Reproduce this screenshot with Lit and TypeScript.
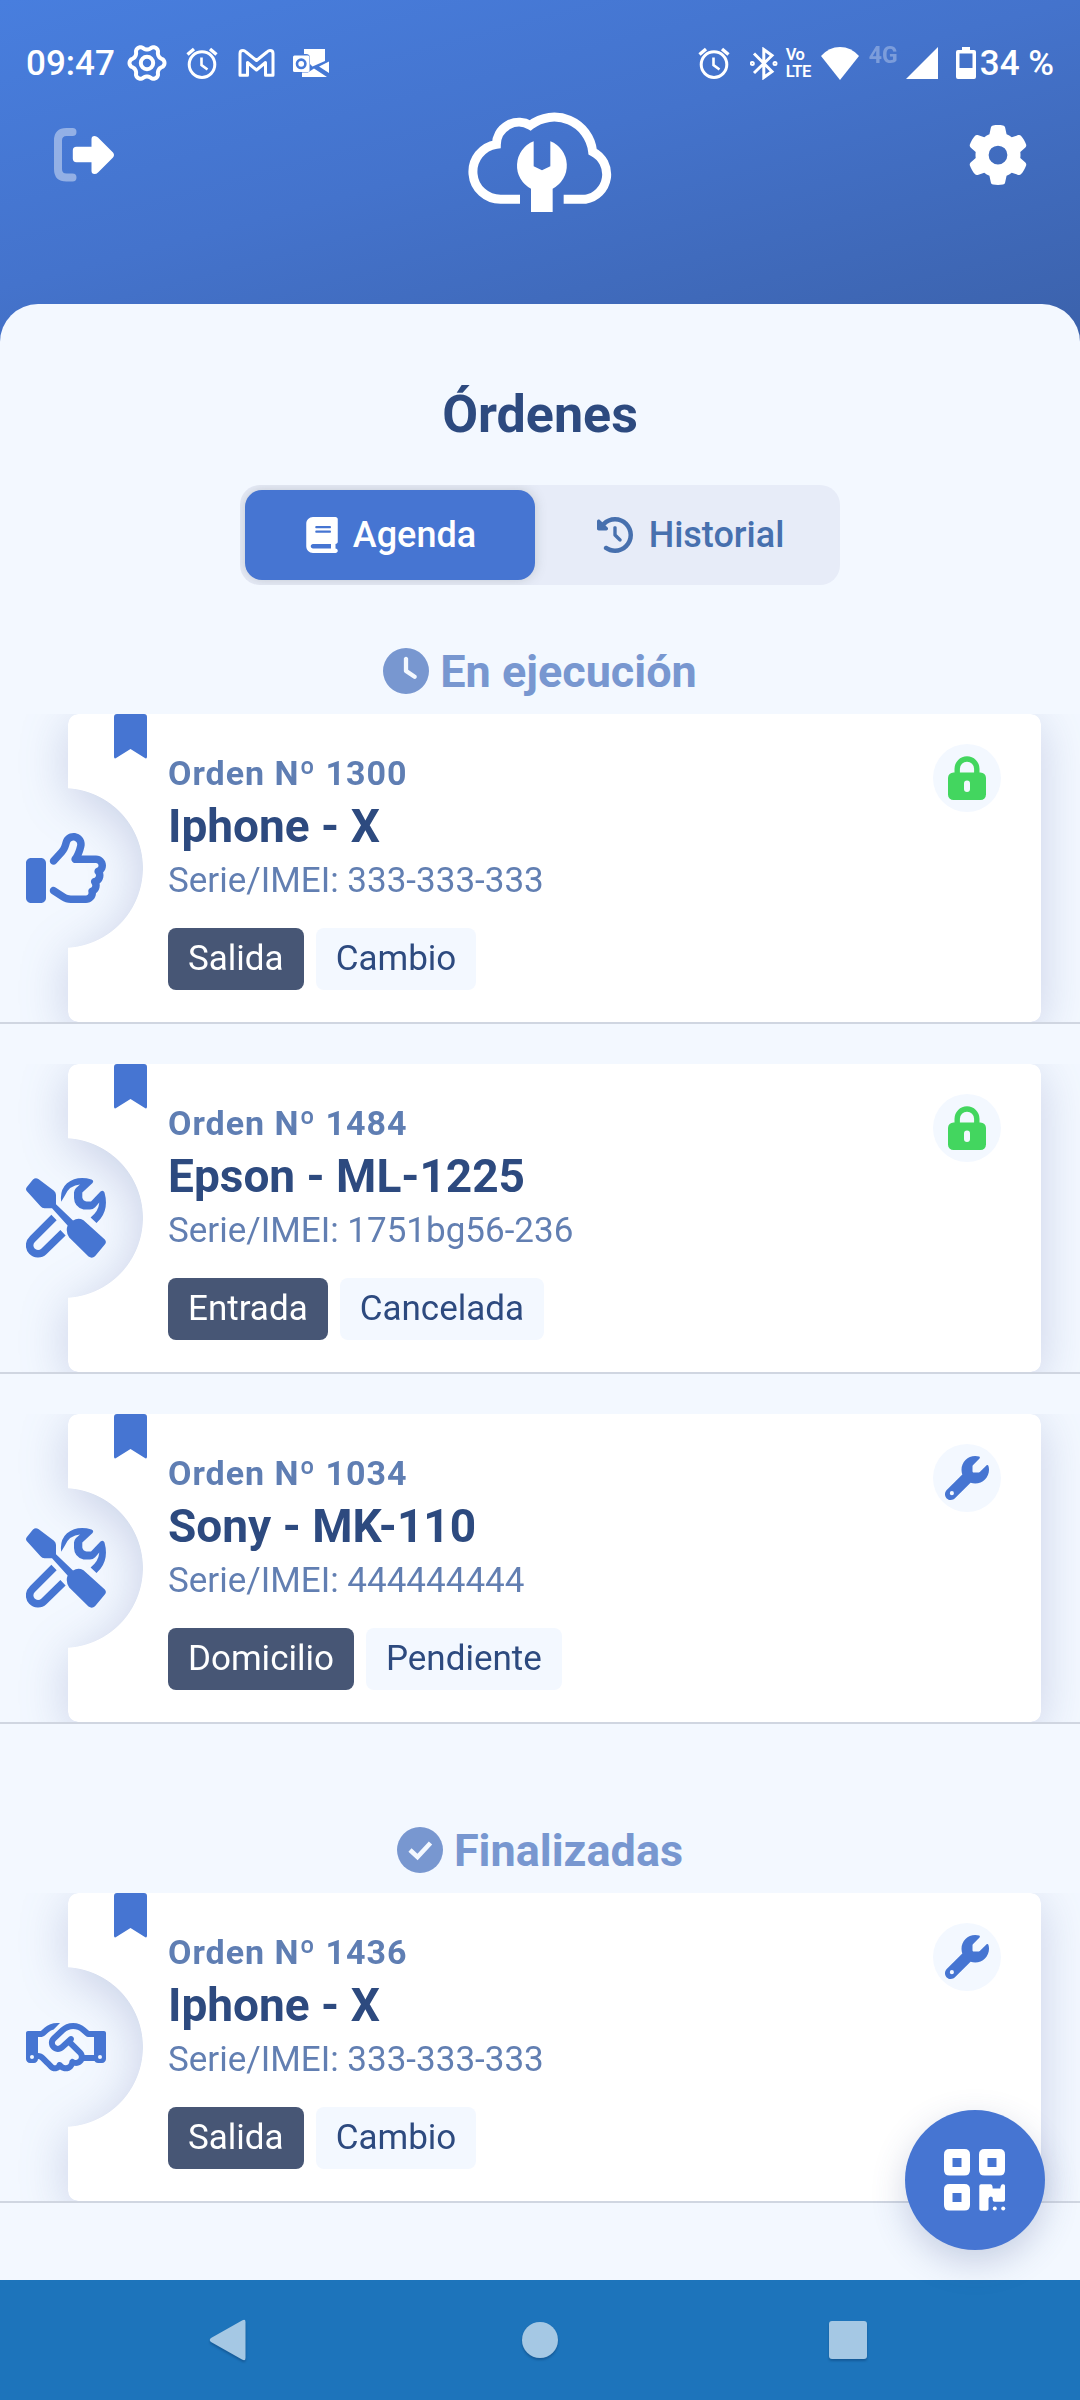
import { LitElement, html, css, svg } from "lit";
import { customElement, property } from "lit/decorators.js";

interface Order {
  id: string;
  device: string;
  serial: string;
  kind: string;
  state: string;
  icon: "thumb" | "tools" | "hands";
  badge: "lock" | "wrench";
}

const RUNNING: Order[] = [
  { id: "1300", device: "Iphone - X", serial: "333-333-333", kind: "Salida", state: "Cambio", icon: "thumb", badge: "lock" },
  { id: "1484", device: "Epson - ML-1225", serial: "1751bg56-236", kind: "Entrada", state: "Cancelada", icon: "tools", badge: "lock" },
  { id: "1034", device: "Sony - MK-110", serial: "444444444", kind: "Domicilio", state: "Pendiente", icon: "tools", badge: "wrench" },
];

const FINISHED: Order[] = [
  { id: "1436", device: "Iphone - X", serial: "333-333-333", kind: "Salida", state: "Cambio", icon: "hands", badge: "wrench" },
];

/* Six-lobed closed outline used by the status bar cog. */
function cogOutline(c: number, r: number, amp: number): string {
  const pts: string[] = [];
  for (let i = 0; i < 120; i++) {
    const a = (i / 120) * Math.PI * 2;
    const w = Math.cos(6 * a);
    const k = r + amp * Math.sign(w) * Math.pow(Math.abs(w), 0.7);
    pts.push(`${(c + k * Math.cos(a)).toFixed(2)} ${(c + k * Math.sin(a)).toFixed(2)}`);
  }
  return "M" + pts.join("L") + "Z";
}

const alarm = html`<svg class="ic" width="32" height="32" viewBox="0 0 32 32" fill="none" stroke="#fff">
  <circle cx="16" cy="17.6" r="12.8" stroke-width="3"></circle>
  <path d="M1.5 7.5L8 2M30.500 7.500L24 2" stroke-width="3.400"></path>
  <path d="M15.500 10.500V18L21.500 22.500" stroke-width="2.600"></path>
</svg>`;

const ICONS = {
  thumb: html`<svg width="80" height="80" viewBox="0 0 512 512" fill="currentColor"><path d="M323.8 34.8c-38.2-10.9-78.1 11.2-89 49.4l-5.7 20c-3.7 13-10.4 25-19.5 35l-51.3 56.4c-8.9 9.8-8.2 25 1.6 33.9s25 8.2 33.9-1.6l51.3-56.4c14.1-15.5 24.4-34 30.1-54.1l5.7-20c3.6-12.7 16.9-20.1 29.7-16.5s20.1 16.9 16.5 29.7l-5.7 20c-5.7 19.9-14.7 38.7-26.6 55.5c-5.2 7.3-5.8 16.9-1.7 24.9s12.3 13 21.3 13L448 224c8.8 0 16 7.2 16 16c0 6.8-4.3 12.7-10.4 15c-7.4 2.8-13 9-14.9 16.7s.1 15.8 5.3 21.7c2.5 2.8 4 6.5 4 10.6c0 7.8-5.6 14.3-13 15.7c-8.2 1.6-15.1 7.3-18 15.2s-1.6 16.7 3.6 23.3c2.1 2.7 3.4 6.1 3.4 9.9c0 6.7-4.2 12.6-10.2 14.9c-11.5 4.5-17.7 16.9-14.4 28.8c.4 1.3 .6 2.8 .6 4.3c0 8.8-7.2 16-16 16H286.5c-12.6 0-25-3.7-35.5-10.7l-61.7-41.1c-11-7.4-25.9-4.4-33.3 6.7s-4.4 25.9 6.7 33.3l61.7 41.1c18.4 12.3 40 18.8 62.1 18.8H384c34.7 0 62.9-27.6 64-62c14.6-11.7 24-29.7 24-50c0-4.5-.5-8.8-1.3-13c15.4-11.7 25.3-30.2 25.3-51c0-6.5-1-12.8-2.8-18.7C504.8 273.7 512 257.7 512 240c0-35.3-28.6-64-64-64l-92.3 0c4.7-10.4 8.7-21.2 11.8-32.2l5.7-20c10.9-38.2-11.2-78.1-49.4-89zM32 192c-17.7 0-32 14.3-32 32V448c0 17.7 14.3 32 32 32H96c17.700 0 32-14.300 32-32V224c0-17.700-14.300-32-32-32H32z"></path></svg>`,
  tools: html`<svg width="80" height="80" viewBox="0 0 80 80" fill="currentColor">
    <path d="M.7 9.200L7 1.600Q9.500-.8 12.400 1L28 12.800Q30 14.500 30 17V26.200L47 42.600Q52 39.200 57.500 42.200L78.800 61.500Q81 64 78.800 66.600L69 78.300Q66 81 62.500 78.600L43.200 59.500Q39.300 53.500 41.600 47.600L26 30.200H18.500Q16 30 14.500 28.200L.9 13.200Q-.8 11.200 .7 9.200Z"></path>
    <path d="M35.200 23.800Q33.600 12 41 5.300Q51-2.600 65.500 1.500Q68.400 2.800 66.300 5.200L56.300 14.400V19.500Q57 23 60.500 23.500H65L74.500 13.400Q77.200 11.600 78.500 14.400Q82.800 30 74.500 40.800L70.500 45L64.600 39.500Q72.500 33.500 73.300 24.600L69.200 29.200Q67 31.400 64 31.400H57.500Q48.300 29.200 48 20V14.500Q48.200 12 50 10L54 6.500Q43.500 7.500 39.500 16.500Z"></path>
    <path d="M28 39.500L6.300 61.200A8 8 0 0 0 17.800 73.500L37 54.800" fill="none" stroke="currentColor" stroke-width="7.500"></path>
  </svg>`,
  hands: html`<svg width="80" height="64" viewBox="0 0 640 512" fill="currentColor"><path d="M272.2 64.6l-51.1 51.1c-15.3 4.2-29.5 11.9-41.5 22.5L153 161.9C142.8 171 129.5 176 115.8 176H96V304c20.4 .6 39.8 8.9 54.3 23.4l35.6 35.6 7 7 0 0L219.9 397c6.2 6.2 16.4 6.2 22.6 0c1.7-1.7 3-3.7 3.7-5.8c2.8-7.7 9.3-13.5 17.3-15.3s16.4 .6 22.2 6.5L296.5 393c11.6 11.6 30.4 11.6 41.9 0c5.4-5.4 8.3-12.3 8.6-19.4c.4-8.8 5.6-16.6 13.6-20.4s17.3-3 24.4 2.1c9.4 6.7 22.5 5.8 30.9-2.6c9.4-9.4 9.4-24.6 0-33.9L340.1 243l-35.8 33c-27.3 25.2-69.2 25.6-97 .9c-31.7-28.2-32.4-77.4-1.6-106.5l70.1-66.2C303.2 78.4 339.4 64 377.1 64c36.1 0 71 13.3 97.9 37.2L505.1 128H544h40 40c8.8 0 16 7.2 16 16V352c0 17.7-14.3 32-32 32H576c-11.8 0-22.2-6.4-27.7-16H463.4c-3.4 6.7-7.9 13.1-13.5 18.7c-17.1 17.1-40.8 23.8-63 20.1c-3.6 7.3-8.5 14.1-14.6 20.2c-27.3 27.3-70 30-100.4 8.1c-25.1 20.8-62.5 19.5-86-4.1L159 404l-7-7-35.6-35.6c-5.5-5.5-12.7-8.7-20.4-9.3C96 369.7 81.6 384 64 384H32c-17.7 0-32-14.3-32-32V144c0-8.8 7.2-16 16-16H56 96h19.8c2 0 3.9-.7 5.3-2l26.5-23.6C175.5 77.7 211.4 64 248.7 64H259c4.4 0 8.9 .2 13.2 .6zM544 320V176H496c-5.9 0-11.6-2.2-15.9-6.1l-36.9-32.8c-18.2-16.2-41.7-25.1-66.1-25.1c-25.4 0-49.8 9.7-68.3 27.1l-70.1 66.2c-10.3 9.8-10.1 26.3 .5 35.7c9.3 8.3 23.4 8.1 32.5-.3l71.9-66.4c9.7-9 24.9-8.4 33.9 1.4s8.4 24.9-1.4 33.9l-.8 .8 74.400 74.400c10 10 16.500 22.300 19.400 35.100H544zM64 336a16 16 0 1 0 -32 0 16 16 0 1 0 32 0zm528 16a16 16 0 1 0 0-32 16 16 0 1 0 0 32z"></path></svg>`,
};

const BADGES = {
  lock: html`<svg width="38" height="44" viewBox="0 0 38 44">
    <path d="M9.200 18V12.800a9.800 9.800 0 0 1 19.600 0V18" fill="none" stroke="#43d65f" stroke-width="5.400"></path>
    <rect y="16.500" width="38" height="27.500" rx="5.500" fill="#43d65f"></rect>
    <rect x="16" y="24.500" width="6" height="11.500" rx="3" fill="#f3f8ff"></rect>
  </svg>`,
  wrench: html`<svg width="44" height="44" viewBox="0 0 512 512" fill="#4675d2"><path d="M352 320c88.4 0 160-71.6 160-160c0-15.3-2.2-30.1-6.2-44.2c-3.1-10.8-16.4-13.2-24.3-5.3l-76.8 76.8c-3 3-7.1 4.7-11.3 4.7H336c-8.8 0-16-7.2-16-16V118.6c0-4.2 1.7-8.3 4.7-11.3l76.8-76.8c7.9-7.9 5.4-21.2-5.3-24.3C382.1 2.200 367.300 0 352 0C263.600 0 192 71.600 192 160c0 19.100 3.400 37.500 9.500 54.500L19.900 396.100C7.200 408.800 0 426.100 0 444.100C0 481.600 30.400 512 67.900 512c18 0 35.300-7.200 48-19.900L297.500 310.500c17 6.200 35.400 9.500 54.500 9.500zM80 408a24 24 0 1 1 0 48 24 24 0 1 1 0-48z"></path></svg>`,
};

@customElement("status-bar")
class StatusBar extends LitElement {
  static styles = css`
    :host { display: flex; align-items: center; justify-content: space-between; height: 126px; padding: 0 26px 0 26px; box-sizing: border-box; color: #fff; font: 500 35px/40px Roboto, sans-serif; }
    .side { display: flex; align-items: center; }
    .ic { display: block; flex: none; }
    .cog { margin-left: 12px; }
    .g1 { margin-left: 19px; }
    .g2 { margin-left: 20px; }
    .g3 { margin-left: 18px; }
    .bt { margin-left: 20px; }
    .volte { display: flex; flex-direction: column; width: 28px; margin: 0 7px 0 8px; font-size: 16.500px; line-height: 17px; font-weight: 600; letter-spacing: -0.5px; }
    .net { width: 31px; margin: -14px 6px 0 10px; font-size: 23px; line-height: 26px; font-weight: 700; opacity: 0.3; }
    .bat { margin: 0 4px 0 18px; }
    .time { position: relative; top: 1px; }
  `;
  render() {
    return html`
      <div class="side">
        <span class="time">09:47</span>
        <svg class="ic cog" width="40" height="40" viewBox="0 0 40 40" fill="none" stroke="#fff" stroke-width="4">
          <path d=${cogOutline(20, 15.5, 2)} stroke-linejoin="round"></path><circle cx="20" cy="20" r="6.200"></circle>
        </svg>
        <span class="g1">${alarm}</span>
        <svg class="ic g2" width="37" height="28" viewBox="0 0 37 28" fill="none" stroke="#fff" stroke-width="3" stroke-linejoin="round">
          <path d="M2 4.500Q2 1.600 5 1.600Q6.500 1.600 8 3L18.500 11.500L29 3Q30.500 1.600 32 1.600Q35 1.600 35 4.500V26.200H27.500V13.500L18.500 21L9.500 13.500V26.200H2Z"></path>
        </svg>
        <svg class="ic g3" width="36" height="29" viewBox="0 0 36 29" fill="#fff">
          <path d="M11 0H32V12L19.500 17.500L17 15V9Q17 5 13 5H11Z"></path>
          <path d="M36 12.500V24L26 17.500ZM9 23.500H15L21 19.500L34 28H9Z"></path>
          <rect y="6.500" width="16.500" height="16.500" rx="1.500"></rect>
          <circle cx="8.200" cy="14.800" r="4.200" fill="none" stroke="#477ad8" stroke-width="2.600"></circle>
        </svg>
      </div>
      <div class="side">
        ${alarm}
        <svg class="ic bt" width="28" height="33" viewBox="0 0 28 33" fill="none" stroke="#fff" stroke-width="3">
          <path d="M4 6.500L22 24.500L13.800 30.500V2.500L22 8.500L4 26"></path><circle cx="2.300" cy="16.500" r="1" ></circle><circle cx="25" cy="16.500" r="1"></circle>
        </svg>
        <div class="volte"><span>Vo</span><span>LTE</span></div>
        <svg class="ic" width="38" height="33" viewBox="0 0 38 33" fill="#fff"><path d="M0 9Q8 0 19 0T38 9L19 33Z"></path></svg>
        <span class="net">4G</span>
        <svg class="ic" width="32" height="32" viewBox="0 0 32 32" fill="#fff"><path d="M32 0V32H0Z"></path></svg>
        <svg class="ic bat" width="20" height="32" viewBox="0 0 20 32"><path fill="#fff" fill-rule="evenodd" d="M6 0H14V3H18Q20 3 20 5V30Q20 32 18 32H2Q0 32 0 30V5Q0 3 2 3H6ZM3.500 6.500V21H16.500V6.500Z"></path></svg>
        <span class="time">34 %</span>
      </div>`;
  }
}

@customElement("order-item")
class OrderItem extends LitElement {
  @property({ attribute: false }) order!: Order;
  static styles = css`
    :host { display: block; position: relative; height: 310px; box-sizing: border-box; border-bottom: 2px solid #d0d6e1; overflow: hidden; }
    .lift { filter: drop-shadow(0 9px 24px rgba(64, 80, 150, 0.23)); }
    .card { display: flex; justify-content: space-between; height: 308px; margin: 0 39px 0 68px; padding: 39px 40px 0 100px; box-sizing: border-box; border-radius: 10px; background: #fff; -webkit-mask: radial-gradient(circle at -5px 154px, transparent 79.500px, #000 80.300px); mask: radial-gradient(circle at -5px 154px, transparent 79.500px, #000 80.300px); }
    .glyph { position: absolute; left: 26px; top: 114px; width: 80px; height: 80px; color: #4675d2; display: flex; align-items: center; justify-content: center; }
    .mark { position: absolute; left: 114px; top: 0; display: block; }
    .info { display: flex; flex-direction: column; font-family: Roboto, sans-serif; }
    .num { font-size: 34px; line-height: 40px; font-weight: 700; letter-spacing: 1px; color: #5f7eb3; }
    .device { margin-top: 6px; font-size: 46px; line-height: 54px; font-weight: 700; color: #2d4a7f; }
    .serial { margin-top: 7px; font-size: 35px; line-height: 41px; color: #627fb2; }
    .chips { display: flex; gap: 12px; margin-top: 27px; font-size: 35px; line-height: 41px; }
    .chip { padding: 10px 20px 11px; border-radius: 8px; background: #f3f8ff; color: #2d4a7f; }
    .kind { background: #475675; color: #fff; }
    .badge { display: flex; align-items: center; justify-content: center; width: 68px; height: 68px; margin-top: -9px; border-radius: 50%; background: #f3f8ff; }
  `;
  render() {
    const o = this.order;
    return html`
      <div class="lift">
        <div class="card">
          <div class="info">
            <span class="num">Orden Nº ${o.id}</span>
            <span class="device">${o.device}</span>
            <span class="serial">Serie/IMEI: ${o.serial}</span>
            <div class="chips"><span class="chip kind">${o.kind}</span><span class="chip">${o.state}</span></div>
          </div>
          <div class="badge">${BADGES[o.badge]}</div>
        </div>
      </div>
      <div class="glyph">${ICONS[o.icon]}</div>
      <svg class="mark" width="33" height="45" viewBox="0 0 33 45"><path fill="#4675d2" d="M0 3Q0 0 3 0H30Q33 0 33 3V42.500Q33 45.500 30.500 43.800L16.500 35L2.500 43.800Q0 45.500 0 42.500Z"></path></svg>`;
  }
}

@customElement("app-root")
class AppRoot extends LitElement {
  static styles = css`
    :host { display: flex; flex-direction: column; position: relative; width: 1080px; height: 2400px; overflow: hidden; font-family: Roboto, sans-serif; background: linear-gradient(165deg, #487ede 0%, #4473cc 45%, #3b61aa 100%) 0 0 / 100% 350px no-repeat; }
    .header { display: flex; justify-content: space-between; align-items: flex-start; height: 178px; padding: 0 52px 0 54px; box-sizing: border-box; flex: none; }
    svg { display: block; flex: none; }
    .logout { margin-top: 2px; }
    .logo { margin-top: -28px; margin-left: 2px; }
    .gear { margin-top: -1px; }
    .sheet { flex: 1; display: flex; flex-direction: column; align-items: center; padding-top: 81px; box-sizing: border-box; border-radius: 38px 38px 0 0; background: #f3f8ff; min-height: 0; }
    .title { margin: 0; font-size: 52px; line-height: 60px; font-weight: 700; color: #2d4a7f; }
    .tabs { display: flex; width: 600px; height: 100px; margin-top: 40px; padding: 5px; box-sizing: border-box; border-radius: 20px; background: #e7ecf8; overflow: hidden; }
    .tab { flex: 1; display: flex; align-items: center; justify-content: center; gap: 16px; padding-left: 11px; border-radius: 17px; font-size: 36px; line-height: 42px; font-weight: 500; color: #4770ae; }
    .active { flex: 0 0 290px; gap: 15px; padding-left: 2px; box-sizing: border-box; background: #4675d2; color: #fff; box-shadow: 0 0 12px rgba(90, 100, 100, 0.25); }
    .section { display: flex; align-items: center; gap: 11px; height: 53px; margin: 60px 0 16px; font-size: 45px; line-height: 53px; font-weight: 700; color: #7897d0; }
    .section svg { margin-top: -2px; }
    .late { margin-top: 100px; }
    .list { align-self: stretch; display: flex; flex-direction: column; gap: 40px; }
    .fab { position: absolute; left: 905px; top: 2110px; width: 140px; height: 140px; display: flex; align-items: center; justify-content: center; border-radius: 50%; background: #4675d2; box-shadow: 0 12px 34px rgba(60, 80, 140, 0.24); }
    .nav { flex: none; display: flex; justify-content: space-between; align-items: center; height: 120px; padding: 0 213px 0 209px; box-sizing: border-box; background: #1d74bb; position: relative; }
    .nav svg { filter: drop-shadow(0 2px 1px rgba(0, 30, 70, 0.3)); }
    .nav .home { margin-left: 5px; }
  `;
  private items(list: Order[]) {
    return html`<div class="list">${list.map((o) => html`<order-item .order=${o}></order-item>`)}</div>`;
  }
  private finder(x: number, y: number) {
    return svg`<path fill-rule="evenodd" d="M${x + 5.5} ${y}h15q5.500 0 5.500 5.500v15.500q0 5.500-5.500 5.500h-15q-5.500 0-5.500-5.500v-15.500q0-5.500 5.500-5.500zm3 9v9h9v-9z"></path>`;
  }
  render() {
    return html`
      <status-bar></status-bar>
      <div class="header">
        <svg class="logout" width="60" height="54" viewBox="0 0 60 54">
          <path d="M18.500 4H12.500Q4 4 4 12.500V41Q4 49.500 12.500 49.500H18.500" fill="none" stroke="#fff" stroke-opacity="0.42" stroke-width="8" stroke-linecap="round"></path>
          <path fill="#fff" d="M22.500 18.800H37.500V11Q37.500 8 40.500 8Q42.500 8 44 9.500L59 24.500Q61 27 59 29.500L44 44.500Q42.500 46 40.500 46Q37.500 46 37.500 43V34.200H22.500Q18.800 34.200 18.800 30.500V22.500Q18.800 18.800 22.500 18.800Z"></path>
        </svg>
        <svg class="logo" width="170" height="124" viewBox="0 0 510 372">
          <path d="M189 304H132A83 83 0 0 1 118 139A68 68 0 0 1 220 82A116 116 0 0 1 407 161A76 76 0 0 1 385 304H320" fill="none" stroke="#fff" stroke-width="27"></path>
          <path d="M230 130V205L255 217L280 205V130A78 78 0 0 1 287 272V342H222V272A78 78 0 0 1 230 130Z" fill="#fff"></path>
        </svg>
        <svg class="gear" width="60" height="60" viewBox="0 0 512 512" fill="#fff"><path d="M495.9 166.6c3.2 8.7 .5 18.4-6.4 24.6l-43.3 39.4c1.1 8.3 1.7 16.8 1.7 25.4s-.6 17.1-1.7 25.4l43.3 39.4c6.9 6.2 9.6 15.9 6.4 24.6c-4.4 11.9-9.7 23.3-15.8 34.3l-4.7 8.1c-6.6 11-14 21.4-22.1 31.2c-5.9 7.2-15.7 9.6-24.5 6.8l-55.7-17.7c-13.4 10.3-28.2 18.9-44 25.4l-12.5 57.1c-2 9.1-9 16.3-18.2 17.8c-13.8 2.3-28 3.5-42.5 3.5s-28.7-1.2-42.5-3.5c-9.2-1.5-16.2-8.7-18.2-17.8l-12.5-57.1c-15.8-6.5-30.6-15.1-44-25.4L83.1 425.9c-8.8 2.8-18.6 .3-24.5-6.8c-8.1-9.8-15.5-20.2-22.1-31.2l-4.7-8.1c-6.1-11-11.4-22.4-15.8-34.3c-3.2-8.7-.5-18.4 6.4-24.6l43.3-39.4C64.6 273.1 64 264.6 64 256s.6-17.1 1.7-25.4L22.4 191.2c-6.9-6.2-9.6-15.9-6.4-24.6c4.4-11.9 9.7-23.3 15.8-34.3l4.7-8.1c6.6-11 14-21.4 22.1-31.2c5.9-7.2 15.7-9.6 24.5-6.8l55.7 17.7c13.4-10.3 28.2-18.9 44-25.4l12.5-57.1c2-9.1 9-16.3 18.2-17.8C227.3 1.2 241.5 0 256 0s28.7 1.2 42.5 3.5c9.2 1.5 16.2 8.7 18.2 17.8l12.5 57.1c15.8 6.5 30.600 15.100 44 25.400l55.700-17.700c8.800-2.800 18.600-.3 24.500 6.800c8.100 9.800 15.500 20.200 22.100 31.200l4.700 8.100c6.100 11 11.400 22.400 15.800 34.300zM256 336a80 80 0 1 0 0-160 80 80 0 1 0 0 160z"></path></svg>
      </div>
      <div class="sheet">
        <h1 class="title">Órdenes</h1>
        <div class="tabs">
          <div class="tab active">
            <svg width="32" height="36" viewBox="0 0 448 512" fill="#fff"><path d="M96 0C43 0 0 43 0 96V416c0 53 43 96 96 96H384h32c17.7 0 32-14.3 32-32s-14.3-32-32-32V384c17.7 0 32-14.3 32-32V32c0-17.7-14.3-32-32-32H384 96zm0 384H352v64H96c-17.7 0-32-14.3-32-32s14.3-32 32-32zm32-240c0-8.8 7.2-16 16-16H336c8.8 0 16 7.200 16 16s-7.200 16-16 16H144c-8.800 0-16-7.200-16-16zm16 48H336c8.800 0 16 7.200 16 16s-7.200 16-16 16H144c-8.800 0-16-7.200-16-16s7.200-16 16-16z"></path></svg>
            <span>Agenda</span>
          </div>
          <div class="tab">
            <svg width="36" height="36" viewBox="0 0 512 512" fill="currentColor"><path d="M75 75L41 41C25.9 25.9 0 36.6 0 57.9V168c0 13.3 10.7 24 24 24H134.1c21.4 0 32.1-25.9 17-41l-30.8-30.8C155 85.5 203 64 256 64c106 0 192 86 192 192s-86 192-192 192c-40.8 0-78.6-12.7-109.7-34.4c-14.5-10.1-34.4-6.6-44.6 7.9s-6.6 34.4 7.9 44.6C151.2 495 201.7 512 256 512c141.400 0 256-114.600 256-256S397.400 0 256 0C185.300 0 121.300 28.700 75 75zm181 53c-13.300 0-24 10.700-24 24V256c0 6.400 2.500 12.500 7 17l72 72c9.400 9.400 24.600 9.400 33.900 0s9.400-24.600 0-33.900l-65-65V152c0-13.300-10.700-24-24-24z"></path></svg>
            <span>Historial</span>
          </div>
        </div>
        <div class="section">
          <svg width="46" height="46" viewBox="0 0 512 512" fill="currentColor"><path d="M256 0a256 256 0 1 1 0 512A256 256 0 1 1 256 0zM232 120V256c0 8 4 15.500 10.700 20l96 64c11 7.400 25.900 4.400 33.300-6.700s4.400-25.900-6.700-33.300L280 243.200V120c0-13.300-10.700-24-24-24s-24 10.700-24 24z"></path></svg>
          <span>En ejecución</span>
        </div>
        ${this.items(RUNNING)}
        <div class="section late">
          <svg width="46" height="46" viewBox="0 0 46 46"><circle cx="23" cy="23" r="23" fill="currentColor"></circle><path d="M13 23L20.500 30L33.500 16" fill="none" stroke="#f3f8ff" stroke-width="4.600"></path></svg>
          <span>Finalizadas</span>
        </div>
        ${this.items(FINISHED)}
      </div>
      <div class="nav">
        <svg width="37" height="42" viewBox="0 0 37 42"><path fill="#a5c8e4" d="M33 1.500Q36.500-.5 36.500 3V39Q36.500 42.500 33 40.500L2 23Q-.5 21 2 19Z"></path></svg>
        <svg class="home" width="36" height="36" viewBox="0 0 36 36"><circle cx="18" cy="18" r="18" fill="#a5c8e4"></circle></svg>
        <svg width="38" height="38" viewBox="0 0 38 38"><rect width="38" height="38" rx="3" fill="#a5c8e4"></rect></svg>
      </div>
      <div class="fab">
        <svg width="62" height="62" viewBox="0 0 62 62" fill="#fff">
          ${this.finder(0, 0)}${this.finder(35, 0)}${this.finder(0, 35)}
          <path d="M37 35.300h9.500q2 0 2.200 4.200h7.500q.5-4 2.500-4.200h.8q1.500 0 1.500 1.500V51q0 1.700-1.700 1.700H50.500q-1.800 0-1.800-1.700v-2q0-1.500-2-1.500q-2 .3-2.200 2V60q0 1.700-1.700 1.700H37q-1.700 0-1.700-1.700V37q0-1.700 1.700-1.700z"></path>
          <circle cx="50.800" cy="59.500" r="2"></circle><circle cx="59.200" cy="59.500" r="2"></circle>
        </svg>
      </div>`;
  }
}
